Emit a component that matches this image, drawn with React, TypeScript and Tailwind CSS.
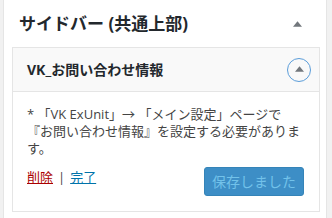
const font = { fontFamily: '"Open Sans", "Noto Sans CJK JP", sans-serif' };

const Triangle = ({ className }: { className: string }) => (
  <svg viewBox="0 0 10 6" className={className} aria-hidden="true">
    <path d="M5 0 L10 6 L0 6 Z" fill="currentColor" />
  </svg>
);

export default function App() {
  return (
    <div
      className="h-[218px] w-[332px] overflow-hidden bg-[#f1f1f1]"
      style={font}
    >
      <div className="ml-[3px] h-full w-[324px] border-x border-[#e5e5e5] bg-white">
        <div className="flex h-[47px] items-center justify-between pl-[15px] pr-[24px]">
          <h2 className="text-[17px] font-bold text-[#23282d]">
            サイドバー (共通上部)
          </h2>
          <Triangle className="h-[6px] w-[9px] text-[#72777c]" />
        </div>

        <div className="ml-[8px] w-[308px] border border-[#e5e5e5] bg-white">
          <div className="flex h-[44px] items-center justify-between border-b border-[#e5e5e5] bg-[#f9f9f9] pl-[14px] pr-[8px]">
            <h3 className="text-[14px] font-bold text-[#23282d]">
              VK_お問い合わせ情報
            </h3>
            <button className="flex h-[24px] w-[24px] items-center justify-center rounded-full border-[1.5px] border-[#5b9dd9]">
              <Triangle className="mb-[1px] h-[6px] w-[9px] text-[#72777c]" />
            </button>
          </div>

          <div className="px-[14px] pb-[15px] pt-[14px]">
            <p className="whitespace-nowrap text-[13px] leading-[17px] text-[#444]">
              * 「VK ExUnit」→ 「メイン設定」ページで
              <br />
              『お問い合わせ情報』を設定する必要がありま
              <br />
              す。
            </p>

            <div className="mt-[10px] flex items-start justify-between pr-[1px]">
              <div className="mt-[2px] flex items-center gap-[5px] text-[13px] leading-[17px]">
                <a className="text-[#a00] underline">削除</a>
                <span className="text-[#444]">|</span>
                <a className="text-[#0073aa] underline">完了</a>
              </div>
              <button
                disabled
                className="h-[29px] w-[100px] rounded-[3px] border border-[#3584b8] bg-[#3d8ec6] text-[14px] text-[#72c2ea]"
              >
                保存しました
              </button>
            </div>
          </div>
        </div>
      </div>
    </div>
  );
}
